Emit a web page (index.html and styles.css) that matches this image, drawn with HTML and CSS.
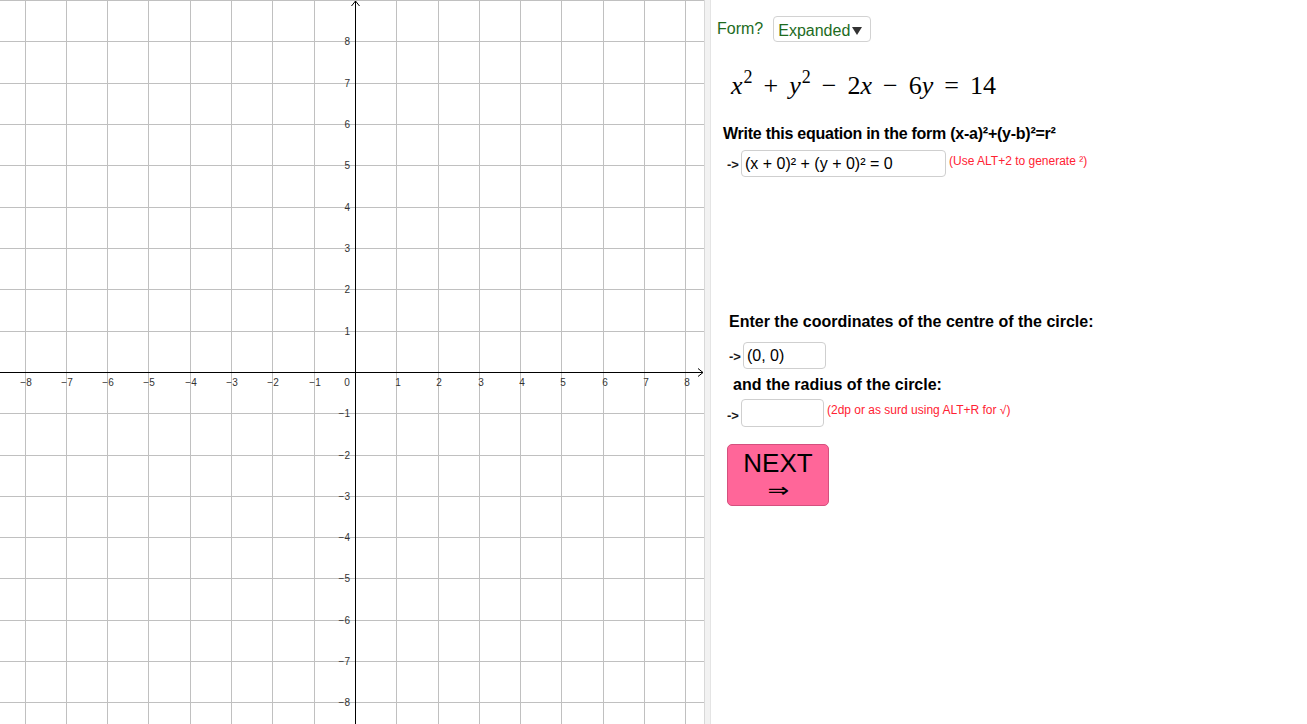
FILE: index.html
```html
<!DOCTYPE html>
<html>
<head>
<meta charset="utf-8">
<link rel="stylesheet" href="styles.css">
</head>
<body>
<div class="app">
  <div class="graph">
    <svg class="plot" width="704" height="724" viewBox="0 0 704 724" xmlns="http://www.w3.org/2000/svg">
      <g class="grid">
        <line x1="25.5" y1="0" x2="25.5" y2="724"/>
        <line x1="66.5" y1="0" x2="66.5" y2="724"/>
        <line x1="107.5" y1="0" x2="107.5" y2="724"/>
        <line x1="148.5" y1="0" x2="148.5" y2="724"/>
        <line x1="190.5" y1="0" x2="190.5" y2="724"/>
        <line x1="231.5" y1="0" x2="231.5" y2="724"/>
        <line x1="272.5" y1="0" x2="272.5" y2="724"/>
        <line x1="314.5" y1="0" x2="314.5" y2="724"/>
        <line x1="396.5" y1="0" x2="396.5" y2="724"/>
        <line x1="438.5" y1="0" x2="438.5" y2="724"/>
        <line x1="479.5" y1="0" x2="479.5" y2="724"/>
        <line x1="520.5" y1="0" x2="520.5" y2="724"/>
        <line x1="561.5" y1="0" x2="561.5" y2="724"/>
        <line x1="603.5" y1="0" x2="603.5" y2="724"/>
        <line x1="644.5" y1="0" x2="644.5" y2="724"/>
        <line x1="685.5" y1="0" x2="685.5" y2="724"/>
        <line x1="0" y1="0.5" x2="704" y2="0.5"/>
        <line x1="0" y1="41.5" x2="704" y2="41.5"/>
        <line x1="0" y1="83.5" x2="704" y2="83.5"/>
        <line x1="0" y1="124.5" x2="704" y2="124.5"/>
        <line x1="0" y1="165.5" x2="704" y2="165.5"/>
        <line x1="0" y1="207.5" x2="704" y2="207.5"/>
        <line x1="0" y1="248.5" x2="704" y2="248.5"/>
        <line x1="0" y1="289.5" x2="704" y2="289.5"/>
        <line x1="0" y1="331.5" x2="704" y2="331.5"/>
        <line x1="0" y1="413.5" x2="704" y2="413.5"/>
        <line x1="0" y1="455.5" x2="704" y2="455.5"/>
        <line x1="0" y1="496.5" x2="704" y2="496.5"/>
        <line x1="0" y1="537.5" x2="704" y2="537.5"/>
        <line x1="0" y1="578.5" x2="704" y2="578.5"/>
        <line x1="0" y1="620.5" x2="704" y2="620.5"/>
        <line x1="0" y1="661.5" x2="704" y2="661.5"/>
        <line x1="0" y1="702.5" x2="704" y2="702.5"/>
      </g>
      <g class="axes">
        <line x1="0" y1="372.5" x2="703" y2="372.5"/>
        <polyline points="698,368.5 703,372.5 698,376.5"/>
        <line x1="355.5" y1="724" x2="355.5" y2="1"/>
        <polyline points="351.5,6 355.5,1 359.5,6"/>
      </g>
      <g class="xlabels">
        <text x="26" y="386">−8</text>
        <text x="67" y="386">−7</text>
        <text x="108" y="386">−6</text>
        <text x="149" y="386">−5</text>
        <text x="191" y="386">−4</text>
        <text x="232" y="386">−3</text>
        <text x="273" y="386">−2</text>
        <text x="315" y="386">−1</text>
        <text x="347" y="386">0</text>
        <text x="398" y="386">1</text>
        <text x="439" y="386">2</text>
        <text x="481" y="386">3</text>
        <text x="522" y="386">4</text>
        <text x="563" y="386">5</text>
        <text x="605" y="386">6</text>
        <text x="646" y="386">7</text>
        <text x="687" y="386">8</text>
      </g>
      <g class="ylabels">
        <text x="350" y="45">8</text>
        <text x="350" y="87">7</text>
        <text x="350" y="128">6</text>
        <text x="350" y="169">5</text>
        <text x="350" y="211">4</text>
        <text x="350" y="252">3</text>
        <text x="350" y="293">2</text>
        <text x="350" y="335">1</text>
        <text x="350" y="417">−1</text>
        <text x="350" y="459">−2</text>
        <text x="350" y="500">−3</text>
        <text x="350" y="541">−4</text>
        <text x="350" y="582">−5</text>
        <text x="350" y="624">−6</text>
        <text x="350" y="665">−7</text>
        <text x="350" y="706">−8</text>
      </g>
    </svg>
  </div>
  <div class="divider"></div>
  <div class="panel">
    <div class="form-row">
      <span class="form-label">Form?</span>
      <div class="select">
        <span class="select-value">Expanded</span>
        <span class="caret"></span>
      </div>
    </div>
    <div class="equation">
      <i>x</i><sup>2</sup><span class="op">+</span><i>y</i><sup>2</sup><span class="op">−</span>2<i>x</i><span class="op">−</span>6<i>y</i><span class="op">=</span>14
    </div>
    <div class="heading h1">Write this equation in the form (x-a)²+(y-b)²=r²</div>
    <div class="entry e1">
      <span class="arrow">-&gt;</span>
      <div class="field wide">(x + 0)² + (y + 0)² = 0</div>
      <span class="note">(Use ALT+2 to generate ²)</span>
    </div>
    <div class="heading h2">Enter the coordinates of the centre of the circle:</div>
    <div class="entry e2">
      <span class="arrow">-&gt;</span>
      <div class="field small">(0, 0)</div>
    </div>
    <div class="heading h3">and the radius of the circle:</div>
    <div class="entry e3">
      <span class="arrow">-&gt;</span>
      <div class="field small tall"></div>
      <span class="note">(2dp or as surd using ALT+R for √)</span>
    </div>
    <div class="next">
      <span class="next-label">NEXT</span>
      <span class="next-arrow">⇒</span>
    </div>
  </div>
</div>
</body>
</html>
```

FILE: styles.css
```css
html, body {
  margin: 0;
  padding: 0;
  background: #ffffff;
}

.app {
  display: flex;
  width: 1307px;
  height: 724px;
  overflow: hidden;
  font-family: "Liberation Sans", Arial, sans-serif;
}

.graph {
  width: 704px;
  height: 724px;
  flex: none;
  background: #ffffff;
}

.plot {
  display: block;
}

.grid line {
  stroke: #c0c0c0;
  stroke-width: 1;
}

.axes line,
.axes polyline {
  stroke: #000000;
  stroke-width: 1;
  fill: none;
}

.xlabels text,
.ylabels text {
  font-family: "Liberation Sans", Arial, sans-serif;
  font-size: 10px;
  fill: #333333;
}

.xlabels text {
  text-anchor: middle;
}

.ylabels text {
  text-anchor: end;
}

.divider {
  width: 5px;
  flex: none;
  background: #f2f2f2;
  border-left: 1px solid #d8d8d8;
  border-right: 1px solid #e4e4e4;
}

.panel {
  flex: 1;
  padding-left: 6px;
  display: flex;
  flex-direction: column;
  align-items: flex-start;
}

.form-row {
  margin-top: 16px;
  height: 26px;
  display: flex;
  align-items: center;
}

.form-label {
  font-size: 16px;
  color: #1d6b1d;
  margin-top: 0;
}

.select {
  margin-left: 10px;
  height: 24px;
  width: 92px;
  box-sizing: content-box;
  border: 1px solid #d2d2d2;
  border-radius: 4px;
  display: flex;
  align-items: center;
  padding-left: 4px;
}

.select-value {
  font-size: 16px;
  color: #1d6b1d;
  margin-top: 4px;
}

.caret {
  width: 0;
  height: 0;
  margin-left: 2px;
  border-left: 5px solid transparent;
  border-right: 5px solid transparent;
  border-top: 8px solid #333333;
  margin-top: 3px;
}

.equation {
  margin-top: 24px;
  margin-left: 14px;
  height: 40px;
  line-height: 40px;
  font-family: "Liberation Serif", "Times New Roman", serif;
  font-size: 26px;
  color: #000000;
  white-space: nowrap;
}

.equation i {
  font-style: italic;
}

.equation sup {
  font-size: 18px;
  line-height: 0;
  vertical-align: 11px;
  margin-left: 1px;
}

.equation .op {
  margin: 0 11px;
}

.heading {
  font-size: 16px;
  font-weight: bold;
  color: #000000;
  height: 20px;
  line-height: 20px;
  white-space: nowrap;
}

.h1 {
  margin-top: 18px;
  margin-left: 6px;
  letter-spacing: -0.25px;
}

.h2 {
  margin-top: 135px;
  margin-left: 12px;
}

.h3 {
  margin-top: 6px;
  margin-left: 16px;
}

.entry {
  display: flex;
  align-items: center;
}

.e1 {
  margin-top: 6px;
  margin-left: 10px;
}

.e2 {
  margin-top: 10px;
  margin-left: 12px;
}

.e3 {
  margin-top: 4px;
  margin-left: 10px;
}

.arrow {
  font-size: 13px;
  font-weight: bold;
  color: #1a1a1a;
  width: 14px;
  margin-top: 1px;
}

.e3 .arrow {
  margin-top: 5px;
}

.field {
  box-sizing: border-box;
  height: 27px;
  border: 1px solid #cfcfcf;
  border-radius: 4px;
  background: #ffffff;
  font-size: 16px;
  line-height: 25px;
  padding-left: 3px;
  color: #000000;
  white-space: nowrap;
}

.field.wide {
  width: 205px;
}

.field.small {
  width: 83px;
}

.field.tall {
  height: 28px;
}

.note {
  font-size: 12px;
  color: #ff2233;
  margin-left: 3px;
  align-self: flex-start;
  margin-top: 4px;
}

.next {
  margin-top: 17px;
  margin-left: 10px;
  box-sizing: border-box;
  width: 102px;
  height: 62px;
  background: #ff6699;
  border: 1px solid #d4507e;
  border-radius: 5px;
  display: flex;
  flex-direction: column;
  align-items: center;
  justify-content: center;
}

.next-label {
  font-size: 26px;
  line-height: 30px;
  color: #000000;
}

.next-arrow {
  font-size: 20px;
  line-height: 24px;
  color: #000000;
  font-family: "DejaVu Sans", sans-serif;
  transform: scaleX(1.3);
}
```
